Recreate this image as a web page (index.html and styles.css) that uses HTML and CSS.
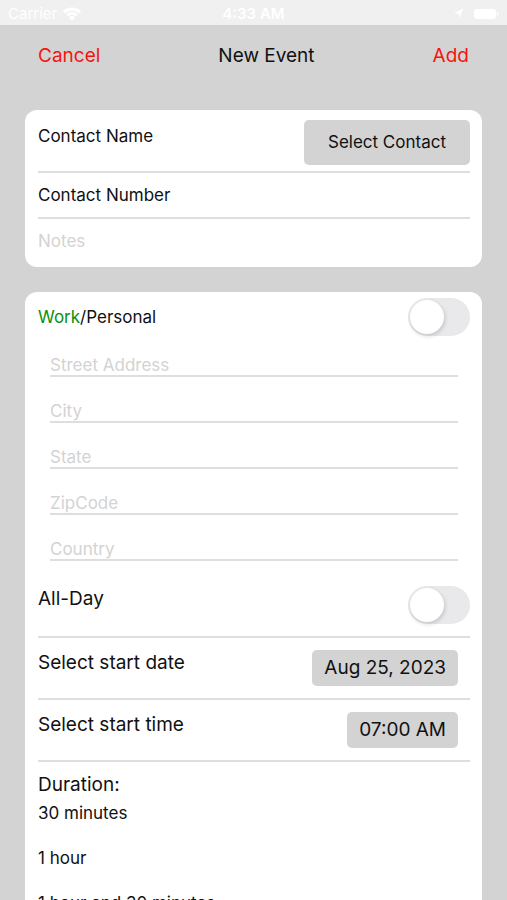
FILE: index.html
```html
<!DOCTYPE html>
<html lang="en">
<head>
    <meta charset="UTF-8">
    <meta name="viewport" content="width=device-width, initial-scale=1.0">
    <title>New Event</title>
    <link rel="stylesheet" href="styles.css">
</head>
<body>
    <div class="status-bar">
        <div class="status-left">
            <span>Carrier</span>
            <svg width="18" height="14" viewBox="0 0 18 14" fill="none" stroke="#fff" stroke-width="3">
                <path d="M1 5.2a11.5 11.5 0 0 1 16 0"/>
                <path d="M4.2 8.4a7 7 0 0 1 9.6 0"/>
                <path d="M9 13.6 5.8 10.4a4.6 4.6 0 0 1 6.4 0Z" fill="#fff" stroke="none"/>
            </svg>
        </div>
        <div class="status-time">4:33 AM</div>
        <div class="status-right">
            <svg width="11" height="11" viewBox="0 0 11 11" fill="#fff">
                <path d="M10.5.5 6 10.5V5.4L.8 5.2Z"/>
            </svg>
            <svg width="25" height="12" viewBox="0 0 25 12" fill="#fff">
                <rect x="0" y="1" width="22" height="10" rx="3"/>
                <path d="M23 4v4c2-.8 2-3.2 0-4Z"/>
            </svg>
        </div>
    </div>

    <header class="header">
        <button type="button" class="header-button">Cancel</button>
        <h1>New Event</h1>
        <button type="button" class="header-button">Add</button>
    </header>

    <form class="event-form">
        <section class="card">
            <div class="row contact-row">
                <span class="label">Contact Name</span>
                <button type="button" class="select-contact">Select Contact</button>
            </div>
            <div class="row">
                <input type="tel" class="text-input dark" placeholder="Contact Number" aria-label="Contact Number">
            </div>
            <div class="row notes-row">
                <input type="text" class="text-input" placeholder="Notes" aria-label="Notes">
            </div>
        </section>

        <section class="card">
            <div class="switch-row">
                <label for="personal"><span class="active">Work</span>/Personal</label>
                <input type="checkbox" role="switch" class="switch" id="personal">
            </div>
            <div class="address">
                <input type="text" placeholder="Street Address" aria-label="Street Address">
                <input type="text" placeholder="City" aria-label="City">
                <input type="text" placeholder="State" aria-label="State">
                <input type="text" placeholder="ZipCode" aria-label="ZipCode">
                <input type="text" placeholder="Country" aria-label="Country">
            </div>
            <div class="row all-day-row">
                <label for="all-day">All-Day</label>
                <input type="checkbox" role="switch" class="switch" id="all-day">
            </div>
            <div class="row picker-row">
                <label for="start-date">Select start date</label>
                <button type="button" class="picker" id="start-date">Aug 25, 2023</button>
            </div>
            <div class="row picker-row">
                <label for="start-time">Select start time</label>
                <button type="button" class="picker" id="start-time">07:00 AM</button>
            </div>
            <div class="duration">
                <h2>Duration:</h2>
                <button type="button">30 minutes</button>
                <button type="button">1 hour</button>
                <button type="button">1 hour and 30 minutes</button>
            </div>
        </section>
    </form>
</body>
</html>
```

FILE: styles.css
```css
* {
    box-sizing: border-box;
}
body {
    font-family: Inter, "Liberation Sans", sans-serif;
    font-size: 17px;
    line-height: 22px;
    background-color: #d3d3d3;
    color: #111;
    margin: 0;
}
button,
input {
    font: inherit;
    color: inherit;
    border: none;
    padding: 0;
    margin: 0;
    background: none;
}
button {
    cursor: pointer;
}
.status-bar {
    display: grid;
    grid-template-columns: 1fr auto 1fr;
    align-items: center;
    height: 25px;
    padding: 2px 8px 0;
    background-color: #f0f0f0;
    color: #fff;
    font-size: 15px;
}
.status-left,
.status-right {
    display: flex;
    align-items: center;
    gap: 6px;
}
.status-right {
    justify-content: flex-end;
    gap: 10px;
}
.status-time {
    font-weight: 600;
}
.header {
    display: flex;
    justify-content: space-between;
    align-items: center;
    padding: 19px 38px;
    font-size: 19px;
    line-height: 24px;
}
.header h1 {
    font-size: 19px;
    font-weight: 400;
    margin: 0;
}
.header-button {
    color: #f5150f;
}
.event-form {
    display: flex;
    flex-direction: column;
    gap: 25px;
    padding: 23px 25px 25px;
}
.card {
    background-color: #fff;
    border-radius: 12px;
    padding: 0 12px 0 13px;
}
.row {
    display: flex;
    justify-content: space-between;
    align-items: flex-start;
    border-bottom: 2px solid #dedede;
}
.contact-row {
    padding: 10px 0 6px;
}
.contact-row .label {
    padding-top: 5px;
}
.select-contact {
    background-color: #d3d3d3;
    border-radius: 5px;
    padding: 11px 24px 12px;
}
.text-input {
    flex: 1;
    width: 100%;
    height: 44px;
}
input::placeholder {
    color: #d3d3d3;
    opacity: 1;
}
.text-input.dark::placeholder {
    color: #111;
}
.notes-row {
    border-bottom: none;
    padding-bottom: 4px;
}
.switch-row {
    display: flex;
    justify-content: space-between;
    align-items: center;
    padding-top: 6px;
}
.active {
    color: #0a8f0a;
}
.switch {
    appearance: none;
    flex: none;
    width: 62px;
    height: 38px;
    padding: 2px;
    border-radius: 19px;
    background-color: #e9e9eb;
    cursor: pointer;
}
.switch::before {
    content: "";
    display: block;
    width: 34px;
    height: 34px;
    border-radius: 50%;
    background-color: #fff;
    box-shadow: 1px 2px 4px rgba(0, 0, 0, 0.16);
}
.switch:checked {
    background-color: #34c759;
}
.switch:checked::before {
    margin-left: auto;
}
.address {
    display: flex;
    flex-direction: column;
    gap: 20px;
    padding: 15px 12px 25px;
}
.address input {
    width: 100%;
    height: 26px;
    padding-top: 3px;
    border-bottom: 2px solid #dedede;
}
.all-day-row {
    padding-bottom: 12px;
    font-size: 19px;
}
.all-day-row label {
    padding-top: 2px;
}
.picker-row {
    padding: 12px 12px 12px 0;
    font-size: 19px;
}
.picker-row label {
    padding-top: 2px;
}
.picker {
    background-color: #d3d3d3;
    border-radius: 5px;
    padding: 7px 12px;
}
.duration {
    display: flex;
    flex-direction: column;
    align-items: flex-start;
    padding: 12px 0;
}
.duration h2 {
    font-size: 19px;
    font-weight: 400;
    margin: 0 0 6px;
}
.duration button {
    margin-bottom: 23px;
}
```
